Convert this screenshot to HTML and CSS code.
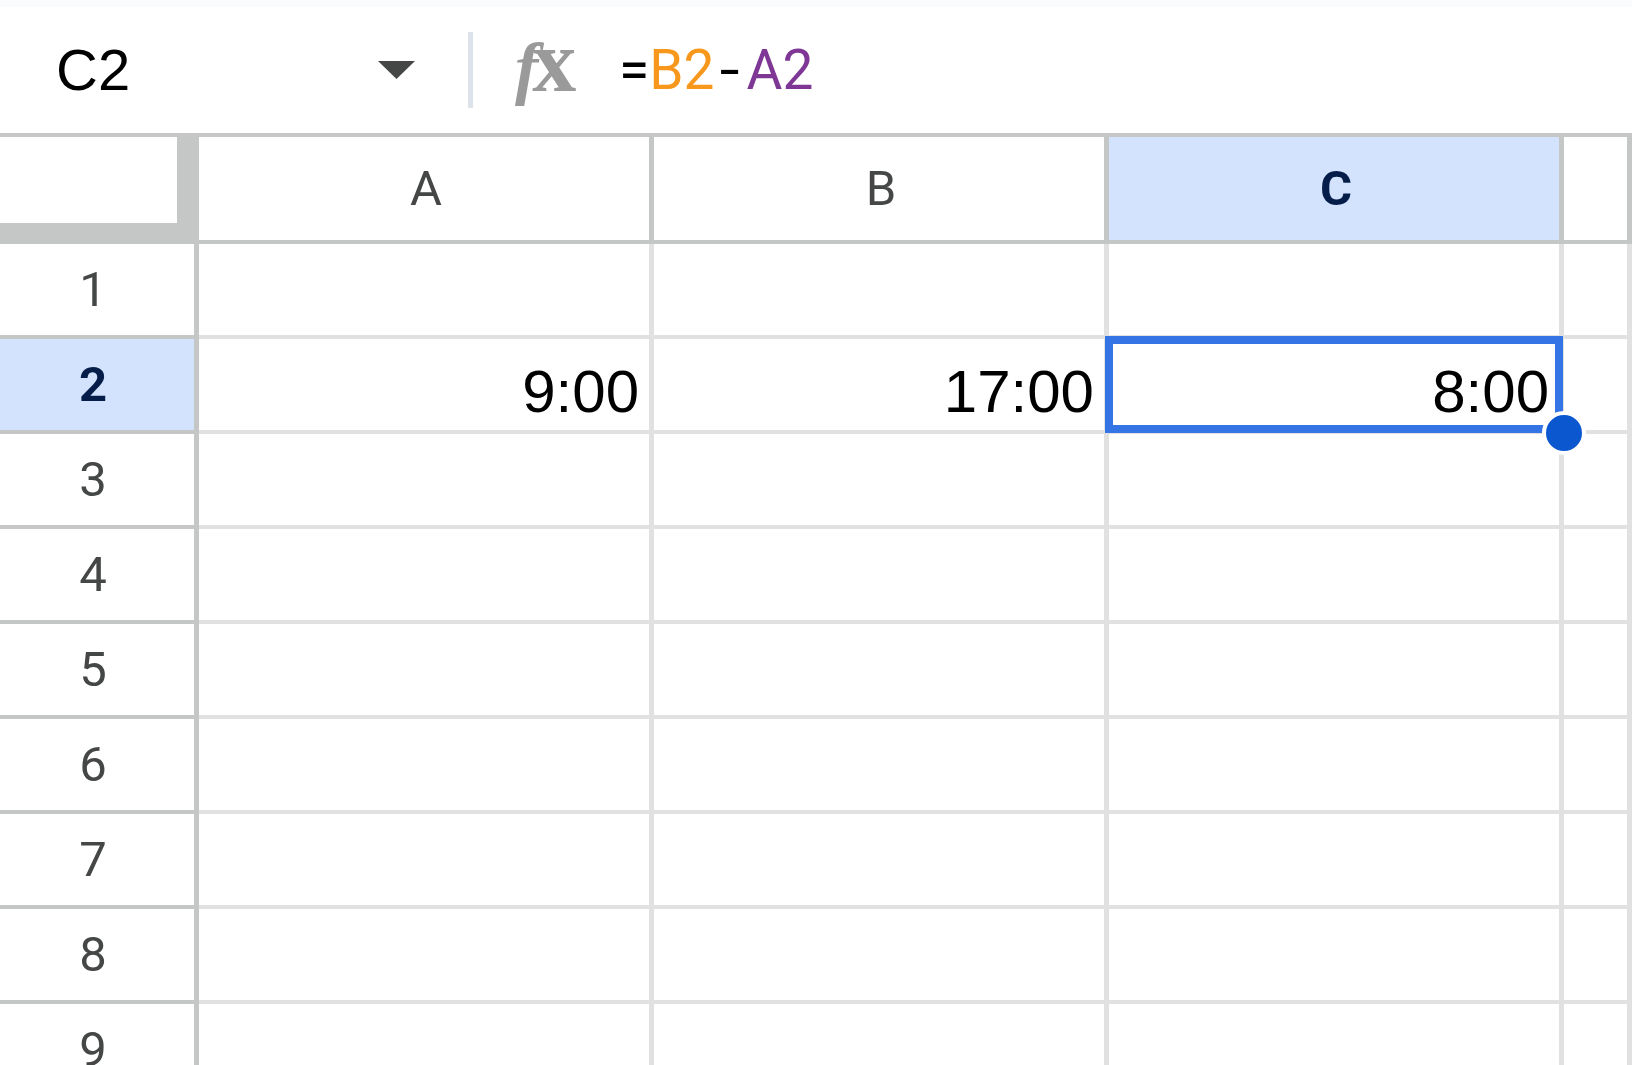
FILE: index.html
```html
<!DOCTYPE html>
<html lang="en">

<head>
  <title>Sheet</title>
  <link rel="stylesheet" href="styles.css">
</head>

<body>
  <div class="top-strip"></div>

  <div class="formula-bar">
    <div class="name-box">
      <span class="cell-ref">C2</span>
      <svg class="caret" width="37" height="18" viewBox="0 0 37 18">
        <polygon points="0,0 37,0 18.5,18" fill="#444746" />
      </svg>
    </div>
    <div class="divider"></div>
    <div class="fx"><span class="fx-f">f</span><span class="fx-x">x</span></div>
    <div class="formula">=<span class="ref-1">B2</span><span class="op">-</span><span class="ref-2">A2</span></div>
  </div>

  <div class="grid">
    <!-- column headers -->
    <div class="corner"></div>
    <div class="col-head">A</div>
    <div class="col-head">B</div>
    <div class="col-head selected">C</div>
    <div class="col-head"></div>

    <div class="row-head">1</div>
    <div class="cell"></div>
    <div class="cell"></div>
    <div class="cell"></div>
    <div class="cell"></div>

    <div class="row-head selected">2</div>
    <div class="cell">9:00</div>
    <div class="cell">17:00</div>
    <div class="cell active">8:00
      <div class="selection">
        <div class="fill-handle"></div>
      </div>
    </div>
    <div class="cell"></div>

    <div class="row-head">3</div>
    <div class="cell"></div>
    <div class="cell"></div>
    <div class="cell"></div>
    <div class="cell"></div>

    <div class="row-head">4</div>
    <div class="cell"></div>
    <div class="cell"></div>
    <div class="cell"></div>
    <div class="cell"></div>

    <div class="row-head">5</div>
    <div class="cell"></div>
    <div class="cell"></div>
    <div class="cell"></div>
    <div class="cell"></div>

    <div class="row-head">6</div>
    <div class="cell"></div>
    <div class="cell"></div>
    <div class="cell"></div>
    <div class="cell"></div>

    <div class="row-head">7</div>
    <div class="cell"></div>
    <div class="cell"></div>
    <div class="cell"></div>
    <div class="cell"></div>

    <div class="row-head">8</div>
    <div class="cell"></div>
    <div class="cell"></div>
    <div class="cell"></div>
    <div class="cell"></div>

    <div class="row-head">9</div>
    <div class="cell"></div>
    <div class="cell"></div>
    <div class="cell"></div>
    <div class="cell"></div>
  </div>
</body>

</html>
```

FILE: styles.css
```css
html,
body {
  margin: 0;
  height: 100%;
  overflow: hidden;
  background: white;
}

.top-strip {
  height: 7px;
  background: #f9fbfd;
}

.formula-bar {
  display: flex;
  align-items: center;
  height: 126px;
  border-bottom: 4px solid #c4c7c5;
}

.name-box {
  box-sizing: border-box;
  width: 415px;
  padding-left: 56px;
  display: flex;
  align-items: center;
  justify-content: space-between;
}

.cell-ref {
  font-family: "Liberation Sans", Arial, sans-serif;
  font-size: 58px;
  color: #000;
  line-height: 1;
}

.caret {
  display: block;
}

.divider {
  width: 5px;
  height: 76px;
  margin-left: 53px;
  background: #dde3ea;
}

/* function icon: italic f with an upright slab x */
.fx {
  width: 64px;
  margin-left: 42px;
  margin-bottom: 16px;
  color: #9a9a9a;
  font-family: "Liberation Serif", "Times New Roman", serif;
  font-weight: bold;
  line-height: 1;
  white-space: nowrap;
}

.fx-f {
  font-style: italic;
  font-size: 70px;
}

.fx-x {
  font-size: 88px;
  margin-left: -6px;
}

.formula {
  margin-left: 40px;
  font-family: Roboto, "Noto Sans", sans-serif;
  font-size: 55px;
  color: #000;
  line-height: 1;
}

.op {
  display: inline-block;
  margin: 0 9px 0 8px;
  transform: scaleX(1.3);
}

.ref-1 {
  color: #f7981d;
}

.ref-2 {
  color: #7e3794;
}

.grid {
  display: grid;
  grid-template-columns: 199px 455px 455px 455px 1fr;
  grid-template-rows: 107px;
  grid-auto-rows: 95px;
}

.grid > div {
  box-sizing: border-box;
}

.corner {
  border-right: 22px solid #c4c7c5;
  border-bottom: 21px solid #c4c7c5;
}

.col-head,
.row-head {
  display: flex;
  align-items: center;
  justify-content: center;
  font-family: Roboto, "Liberation Sans", sans-serif;
  font-size: 49px;
  color: #444746;
  border-right: 5px solid #c4c7c5;
  border-bottom: 4px solid #c4c7c5;
}

.col-head {
  padding-left: 4px;
}

.row-head {
  padding-right: 8px;
}

.col-head.selected,
.row-head.selected {
  background: #d3e3fd;
  color: #041e49;
  font-weight: bold;
}

.cell {
  position: relative;
  display: flex;
  align-items: flex-end;
  justify-content: flex-end;
  padding: 0 10px 4px 0;
  font-family: "Liberation Sans", Arial, sans-serif;
  font-size: 60px;
  color: #000;
  border-right: 5px solid #e1e1e1;
  border-bottom: 4px solid #e1e1e1;
}

.selection {
  position: absolute;
  top: -3px;
  left: -4px;
  right: -4px;
  bottom: -3px;
  border: 8px solid #3574e5;
  z-index: 1;
}

.fill-handle {
  position: absolute;
  right: -31px;
  bottom: -30px;
  width: 36px;
  height: 36px;
  border: 4px solid white;
  border-radius: 50%;
  background: #0b57d0;
}
```
